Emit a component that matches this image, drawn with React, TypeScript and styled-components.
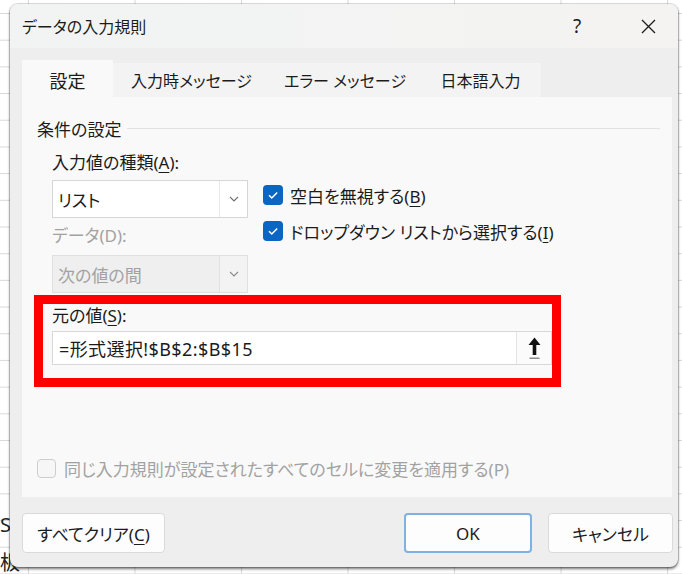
import styled, { createGlobalStyle } from 'styled-components';

const GlobalStyle = createGlobalStyle`
  html, body {
    margin: 0;
    padding: 0;
  }
  body {
    font-family: 'Noto Sans', 'Noto Sans CJK JP', sans-serif;
    font-feature-settings: 'palt';
    color: #1b1b1b;
  }
`;

type DisabledProps = { $disabled?: boolean };

// spreadsheet behind the dialog
const Sheet = styled.div`
  position: relative;
  width: 682px;
  height: 574px;
  overflow: hidden;
  display: flex;
  flex-direction: column;
  justify-content: flex-end;
  background-color: #ffffff;
  background-image: linear-gradient(to right, #d9d9d9 1px, transparent 1px),
    linear-gradient(to bottom, #d9d9d9 1px, transparent 1px);
  background-size: 106.5px 100%, 100% 26.7px;
  background-position: 28px 0, 0 13px;
`;

const SheetCell = styled.div<{ $h: number; $mb?: number }>`
  height: ${({ $h }) => $h}px;
  line-height: ${({ $h }) => $h}px;
  margin-bottom: ${({ $mb }) => $mb ?? 0}px;
  font-size: 20px;
  color: #222;
  white-space: nowrap;
`;

const Dialog = styled.section`
  position: absolute;
  left: 10px;
  top: 4px;
  width: 668px;
  height: 563px;
  box-sizing: border-box;
  display: flex;
  flex-direction: column;
  background: #eeeeee;
  border-radius: 8px;
  overflow: hidden;
  box-shadow: 0 0 0 1px rgba(0, 0, 0, 0.14), 0 2px 3px rgba(0, 0, 0, 0.55);
`;

const TitleBar = styled.header`
  height: 44px;
  flex-shrink: 0;
  display: flex;
  align-items: center;
  justify-content: space-between;
  padding-left: 12px;
  background: linear-gradient(to right, #f1f4f3, #f4f3f2);
`;

const Title = styled.h1`
  margin: 0;
  font-size: 16px;
  font-weight: 400;
`;

const WindowControls = styled.div`
  display: flex;
  gap: 25px;
  padding-right: 7px;
`;

const ControlButton = styled.button`
  width: 46px;
  height: 44px;
  border: none;
  background: transparent;
  display: flex;
  align-items: center;
  justify-content: center;
  padding: 0;
  font-family: 'Noto Sans', sans-serif;
  font-size: 19px;
  color: #1b1b1b;
`;

const Body = styled.div`
  flex: 1;
  padding: 12px 6px 0 12px;
  display: flex;
  flex-direction: column;
`;

const TabList = styled.div`
  height: 37px;
  display: flex;
  align-items: flex-end;
`;

const Tab = styled.div<{ $active?: boolean; $w: number }>`
  width: ${({ $w }) => $w}px;
  height: ${({ $active }) => ($active ? 37 : 34)}px;
  display: flex;
  align-items: center;
  justify-content: center;
  padding-top: ${({ $active }) => ($active ? 3 : 0)}px;
  box-sizing: border-box;
  background: ${({ $active }) => ($active ? '#f9f9f9' : '#f3f3f3')};
  font-size: ${({ $active }) => ($active ? 18 : 16)}px;
  white-space: nowrap;
`;

const Panel = styled.div`
  height: 400px;
  box-sizing: border-box;
  padding: 19px 12px 0 15px;
  background: #f9f9f9;
  display: flex;
  flex-direction: column;
`;

const GroupHeader = styled.div`
  height: 24px;
  display: flex;
  align-items: center;
  font-size: 17px;
  white-space: nowrap;
  &::after {
    content: '';
    flex: 1;
    height: 1px;
    margin-left: 6px;
    background: #e2e2e2;
  }
`;

const FieldGrid = styled.div`
  margin: 11px 0 0 15px;
  display: grid;
  grid-template-columns: 196px auto;
  column-gap: 15px;
`;

const Column = styled.div<{ $top?: number; $gap?: number }>`
  display: flex;
  flex-direction: column;
  padding-top: ${({ $top }) => $top ?? 0}px;
  gap: ${({ $gap }) => $gap ?? 0}px;
`;

const Label = styled.div<DisabledProps & { $mt?: number }>`
  height: 24px;
  line-height: 24px;
  margin-top: ${({ $mt }) => $mt ?? 0}px;
  font-size: 17px;
  color: ${({ $disabled }) => ($disabled ? '#a2a2a2' : '#1b1b1b')};
  white-space: nowrap;
`;

const U = styled.span`
  text-decoration: underline;
  text-underline-offset: 3px;
  text-decoration-thickness: 1px;
`;

const Select = styled.div<DisabledProps & { $mt: number }>`
  margin-top: ${({ $mt }) => $mt}px;
  height: 38px;
  box-sizing: border-box;
  display: flex;
  border: 1px solid ${({ $disabled }) => ($disabled ? '#e0e0e0' : '#d6d6d6')};
  background: ${({ $disabled }) => ($disabled ? '#efefef' : '#ffffff')};
  color: ${({ $disabled }) => ($disabled ? '#a2a2a2' : '#1b1b1b')};
  font-size: 17px;
`;

const SelectValue = styled.div`
  flex: 1;
  display: flex;
  align-items: center;
  padding-left: 5px;
`;

const SelectArrow = styled.div<DisabledProps>`
  width: 27px;
  display: flex;
  align-items: center;
  justify-content: center;
  border-left: 1px solid ${({ $disabled }) => ($disabled ? '#e2e2e2' : '#e8e8e8')};
  background: ${({ $disabled }) => ($disabled ? '#f3f3f3' : '#ffffff')};
`;

const CheckRow = styled.label<DisabledProps & { $gap?: number }>`
  height: 22px;
  display: flex;
  align-items: center;
  gap: ${({ $gap }) => $gap ?? 7}px;
  font-size: 17px;
  color: ${({ $disabled }) => ($disabled ? '#a2a2a2' : '#1b1b1b')};
  white-space: nowrap;
`;

const CheckBox = styled.span<{ $checked?: boolean }>`
  width: ${({ $checked }) => ($checked ? 20 : 19)}px;
  height: ${({ $checked }) => ($checked ? 20 : 19)}px;
  box-sizing: border-box;
  border-radius: 4px;
  display: flex;
  align-items: center;
  justify-content: center;
  flex-shrink: 0;
  background: ${({ $checked }) => ($checked ? '#0a66c2' : '#f6f6f6')};
  border: ${({ $checked }) => ($checked ? 'none' : '1px solid #cdcdcd')};
`;

const SourceBox = styled.div`
  margin: 2px 0 0 -3px;
  width: 527px;
  box-sizing: border-box;
  border: 9px solid #ff0000;
  padding: 0 0 13px 9px;
`;

const SourceInput = styled.div`
  margin-top: 3px;
  width: 500px;
  height: 34px;
  box-sizing: border-box;
  display: flex;
  border: 1px solid #d8d8d8;
  background: #ffffff;
  font-size: 18px;
`;

const InputText = styled.div`
  flex: 1;
  display: flex;
  align-items: center;
  padding-left: 6px;
  letter-spacing: 0.4px;
  white-space: nowrap;
`;

const CollapseButton = styled.div`
  width: 34px;
  display: flex;
  align-items: center;
  justify-content: center;
  border-left: 1px solid #e4e4e4;
  background: #fbfbfb;
`;

const ApplyRow = styled.div`
  margin-top: 70px;
`;

const Footer = styled.div`
  display: flex;
  gap: 16px;
  padding-top: 16px;
  margin-right: -1px;
`;

const Button = styled.button<{ $w: number; $primary?: boolean }>`
  width: ${({ $w }) => $w}px;
  height: 40px;
  box-sizing: border-box;
  border-radius: 4px;
  border: ${({ $primary }) => ($primary ? '2px solid #7fb1e3' : '1px solid #dadada')};
  background: #fdfdfd;
  font-family: inherit;
  font-feature-settings: 'palt';
  font-size: 17px;
  color: #1b1b1b;
  padding: 0;
  white-space: nowrap;
  &:nth-child(2) {
    margin-left: auto;
  }
`;

const Chevron = ({ color }: { color: string }) => (
  <svg width="10" height="6" viewBox="0 0 10 6">
    <path d="M1 1l4 4 4-4" fill="none" stroke={color} strokeWidth="1.1" />
  </svg>
);

const Check = () => (
  <svg width="12" height="10" viewBox="0 0 12 10">
    <path d="M2 5.2l2.8 2.8L10.2 2.4" fill="none" stroke="#fff" strokeWidth="1.5" />
  </svg>
);

const UploadArrow = () => (
  <svg width="13" height="24" viewBox="0 0 13 24">
    <path d="M6.5 1.5L12.5 9H8.3V19H4.7V9H0.5Z" fill="#111" />
    <rect x="1.5" y="21.5" width="10" height="1.5" fill="#8a8a8a" />
  </svg>
);

const CloseIcon = () => (
  <svg width="15" height="15" viewBox="0 0 15 15">
    <path d="M1 1l13 13M14 1L1 14" stroke="#1b1b1b" strokeWidth="1.3" />
  </svg>
);

export default function App() {
  return (
    <>
      <GlobalStyle />
      <Sheet>
        <SheetCell $h={20} $mb={17}>
          S
        </SheetCell>
        <SheetCell $h={22}>板</SheetCell>

        <Dialog>
          <TitleBar>
            <Title>データの入力規則</Title>
            <WindowControls>
              <ControlButton>?</ControlButton>
              <ControlButton>
                <CloseIcon />
              </ControlButton>
            </WindowControls>
          </TitleBar>

          <Body>
            <TabList>
              <Tab $active $w={91}>設定</Tab>
              <Tab $w={157}>入力時メッセージ</Tab>
              <Tab $w={150}>エラー メッセージ</Tab>
              <Tab $w={121}>日本語入力</Tab>
            </TabList>

            <Panel>
              <GroupHeader>条件の設定</GroupHeader>

              <FieldGrid>
                <Column>
                  <Label>
                    入力値の種類(<U>A</U>):
                  </Label>
                  <Select $mt={5}>
                    <SelectValue>リスト</SelectValue>
                    <SelectArrow>
                      <Chevron color="#707070" />
                    </SelectArrow>
                  </Select>
                  <Label $disabled $mt={6}>
                    データ(D):
                  </Label>
                  <Select $disabled $mt={7}>
                    <SelectValue>次の値の間</SelectValue>
                    <SelectArrow $disabled>
                      <Chevron color="#8a8a8a" />
                    </SelectArrow>
                  </Select>
                </Column>

                <Column $top={33} $gap={14}>
                  <CheckRow>
                    <CheckBox $checked>
                      <Check />
                    </CheckBox>
                    <span>
                      空白を無視する(<U>B</U>)
                    </span>
                  </CheckRow>
                  <CheckRow>
                    <CheckBox $checked>
                      <Check />
                    </CheckBox>
                    <span>
                      ドロップダウン リストから選択する(<U>I</U>)
                    </span>
                  </CheckRow>
                </Column>
              </FieldGrid>

              <SourceBox>
                <Label>
                  元の値(<U>S</U>):
                </Label>
                <SourceInput>
                  <InputText>=形式選択!$B$2:$B$15</InputText>
                  <CollapseButton>
                    <UploadArrow />
                  </CollapseButton>
                </SourceInput>
              </SourceBox>

              <ApplyRow>
                <CheckRow $disabled $gap={8}>
                  <CheckBox />
                  <span>同じ入力規則が設定されたすべてのセルに変更を適用する(P)</span>
                </CheckRow>
              </ApplyRow>
            </Panel>

            <Footer>
              <Button $w={143}>
                すべてクリア(<U>C</U>)
              </Button>
              <Button $w={128} $primary>
                OK
              </Button>
              <Button $w={125}>キャンセル</Button>
            </Footer>
          </Body>
        </Dialog>
      </Sheet>
    </>
  );
}
